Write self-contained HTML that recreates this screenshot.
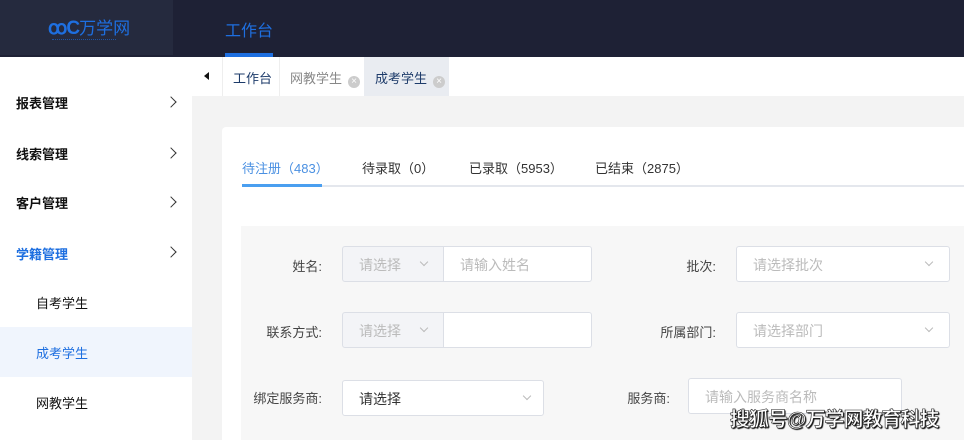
<!DOCTYPE html><html><head><meta charset="utf-8"><style>
*{margin:0;padding:0;box-sizing:border-box}
body{width:964px;height:440px;overflow:hidden;position:relative;font-family:"Liberation Sans","Noto Sans CJK SC",sans-serif;background:#f3f3f3;font-size:13px}
.a{position:absolute}
.hdr{left:0;top:0;width:964px;height:57px;background:#1e2135}
.logo{left:0;top:0;width:173px;height:55px;background:#252a3e}
.side{left:0;top:57px;width:192px;height:383px;background:#fff}
.mi{position:absolute;left:16px;font-size:13px;font-weight:bold;color:#111}
.chev{position:absolute;left:167px;width:8px;height:8px;border-right:1.3px solid #333;border-top:1.3px solid #333;transform:rotate(45deg)}
.sub{position:absolute;left:36px;font-size:13px;color:#111}
.tabbar{left:192px;top:57px;width:772px;height:39px;background:#fff}
.inp{position:absolute;border:1px solid #dcdfe6;border-radius:3px;background:#fff;height:36px;font-size:14px;color:#bbb;padding:8px 0 0 16px}
.dd{position:absolute;width:6px;height:6px;border-right:1px solid #bbb;border-bottom:1px solid #bbb;transform:rotate(45deg)}
.lbl{position:absolute;font-size:13px;color:#444;text-align:right}
.x{display:inline-block;width:12px;height:12px;border-radius:50%;background:#ccc;color:#fff;font-size:10px;line-height:12px;text-align:center;vertical-align:-1px;margin-left:6px}
</style></head><body>
<div class="a hdr"></div>
<div class="a logo"></div>
<div class="a" style="left:48px;top:14px;color:#1e6fe0;font-size:19px;font-weight:bold;letter-spacing:-1px">ꝏC<span style="font-weight:normal;letter-spacing:0;font-size:17px">万学网</span></div>
<div class="a" style="left:52px;top:39px;width:64px;height:2px;border-top:1px dotted #1e6fe0;opacity:.6"></div>
<div class="a" style="left:225px;top:17px;color:#1e6fe0;font-size:16px">工作台</div>
<div class="a" style="left:225px;top:53px;width:48px;height:4px;background:#1e6fe0"></div>
<div class="a side">
<div class="mi" style="top:36px">报表管理</div><div class="chev" style="top:41px"></div>
<div class="mi" style="top:87px">线索管理</div><div class="chev" style="top:92px"></div>
<div class="mi" style="top:136px">客户管理</div><div class="chev" style="top:141px"></div>
<div class="mi" style="top:187px;color:#1e6fe0">学籍管理</div><div class="chev" style="top:191px"></div>
<div class="sub" style="top:236px">自考学生</div>
<div style="position:absolute;left:0;top:270px;width:192px;height:50px;background:#f0f5fd"></div>
<div class="sub" style="top:286px;color:#1e6fe0">成考学生</div>
<div class="sub" style="top:336px">网教学生</div>
</div>
<div class="a tabbar">
<div style="position:absolute;left:12px;top:15px;width:0;height:0;border-top:4px solid transparent;border-bottom:4px solid transparent;border-right:5px solid #111"></div>
<div style="position:absolute;left:30px;top:0;width:1px;height:39px;background:#eee"></div>
<div style="position:absolute;left:41px;top:11px;color:#1d3b6a;font-size:13px">工作台</div>
<div style="position:absolute;left:87px;top:0;width:1px;height:39px;background:#eee"></div>
<div style="position:absolute;left:98px;top:11px;color:#888;font-size:13px">网教学生<span class="x">×</span></div>
<div style="position:absolute;left:172px;top:0;width:85px;height:39px;background:#e9ecf1"></div>
<div style="position:absolute;left:183px;top:11px;color:#1d3b6a;font-size:13px">成考学生<span class="x">×</span></div>
</div>
<div class="a" style="left:222px;top:127px;width:742px;height:313px;background:#fff;border-radius:4px 0 0 0"></div>
<div class="a" style="left:242px;top:158px;font-size:13px;color:#4a90e2">待注册（483）</div>
<div class="a" style="left:362px;top:158px;font-size:13px;color:#333">待录取（0）</div>
<div class="a" style="left:469px;top:158px;font-size:13px;color:#333">已录取（5953）</div>
<div class="a" style="left:595px;top:158px;font-size:13px;color:#333">已结束（2875）</div>
<div class="a" style="left:242px;top:185px;width:722px;height:2px;background:#e4e7ed"></div>
<div class="a" style="left:242px;top:184px;width:80px;height:3px;background:#4a9ff0"></div>
<div class="a" style="left:241px;top:226px;width:723px;height:214px;background:#f7f7f7"></div>
<div class="lbl" style="left:260px;top:256px;width:62px">姓名:</div>
<div class="inp" style="left:342px;top:246px;width:102px;background:#f3f4f7;border-radius:3px 0 0 3px">请选择</div><div class="dd" style="left:421px;top:259px"></div>
<div class="inp" style="left:443px;top:246px;width:149px;border-radius:0 3px 3px 0">请输入姓名</div>
<div class="lbl" style="left:640px;top:256px;width:76px">批次:</div>
<div class="inp" style="left:736px;top:246px;width:214px">请选择批次</div><div class="dd" style="left:926px;top:259px"></div>
<div class="lbl" style="left:240px;top:322px;width:82px">联系方式:</div>
<div class="inp" style="left:342px;top:312px;width:102px;background:#f3f4f7;border-radius:3px 0 0 3px">请选择</div><div class="dd" style="left:421px;top:325px"></div>
<div class="inp" style="left:443px;top:312px;width:149px;border-radius:0 3px 3px 0"></div>
<div class="lbl" style="left:640px;top:322px;width:76px">所属部门:</div>
<div class="inp" style="left:736px;top:312px;width:214px">请选择部门</div><div class="dd" style="left:926px;top:325px"></div>
<div class="lbl" style="left:240px;top:388px;width:82px">绑定服务商:</div>
<div class="inp" style="left:342px;top:380px;width:202px;color:#333">请选择</div><div class="dd" style="left:524px;top:393px"></div>
<div class="lbl" style="left:600px;top:388px;width:70px">服务商:</div>
<div class="inp" style="left:688px;top:378px;width:214px">请输入服务商名称</div>
<div class="a" style="left:730px;top:403px;font-size:20px;font-weight:bold;color:#fff;letter-spacing:-1px;-webkit-text-stroke:0.6px #222;text-shadow:1px 1px 1px #000">搜狐号@万学网教育科技</div>
</body></html>
